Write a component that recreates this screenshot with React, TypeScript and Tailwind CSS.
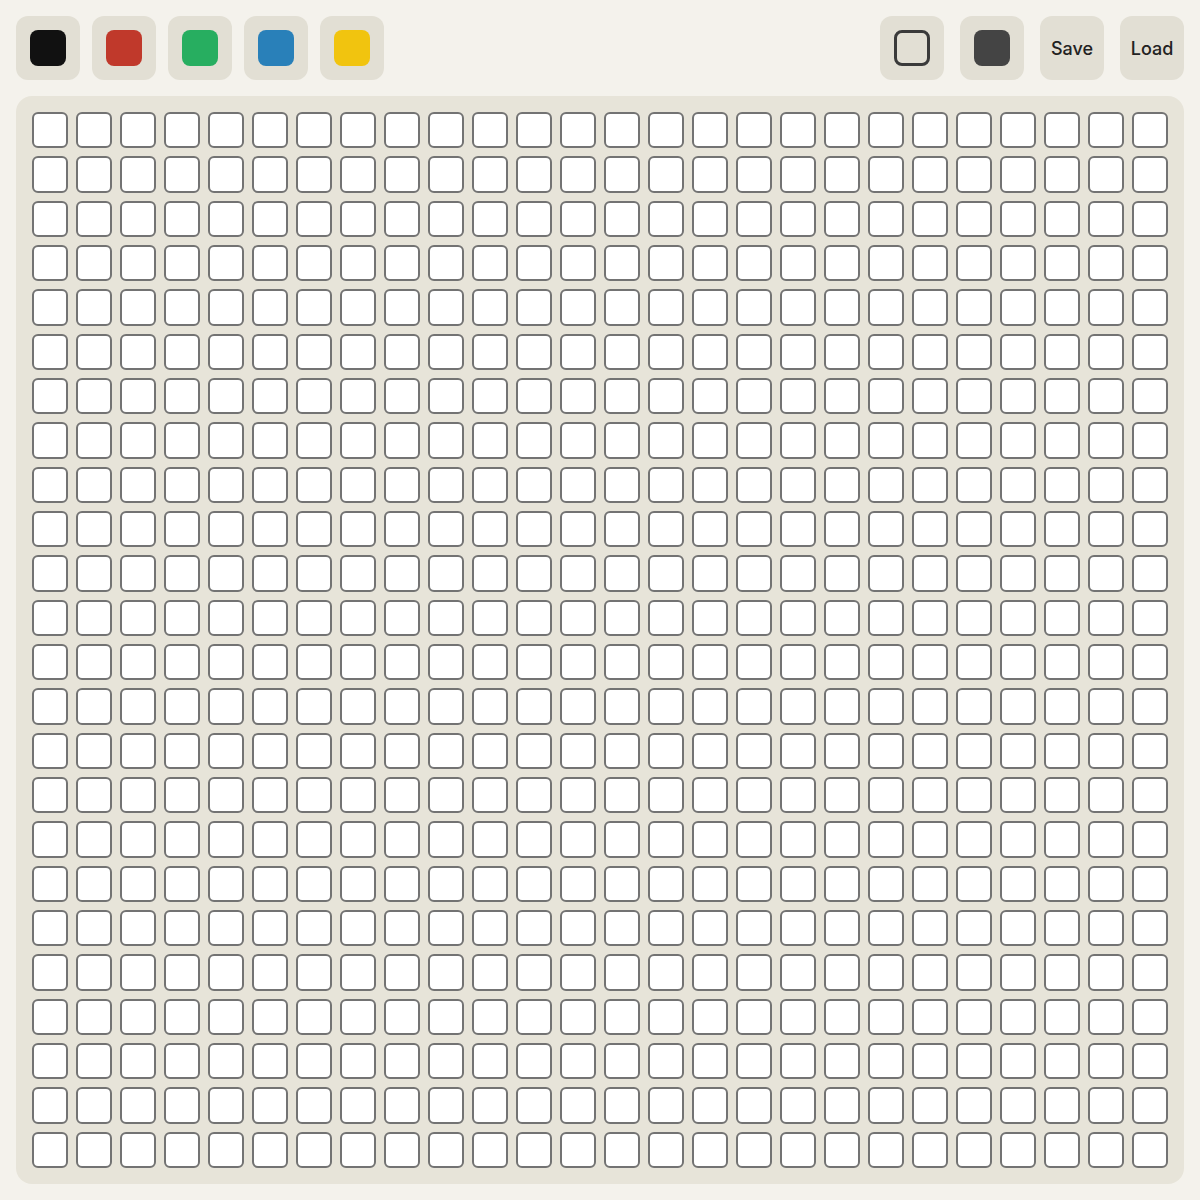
import { useState } from 'react'

const COLS = 26
const ROWS = 24
const COLORS = ['#111111', '#c0392b', '#27ae60', '#2980b9', '#f1c40f']

export default function App() {
  const [color, setColor] = useState(COLORS[0])
  const [cells, setCells] = useState<(string | null)[]>(() => Array(COLS * ROWS).fill(null))

  function paint(i: number) {
    setCells(prev => prev.map((c, j) => (j === i ? color : c)))
  }

  return (
    <div className="h-screen w-full bg-[#f4f2ec] p-4 flex flex-col gap-4 font-['Inter',sans-serif]">
      {/* Toolbar */}
      <div className="flex items-center justify-between h-16 shrink-0">
        <div className="flex gap-3">
          {COLORS.map(c => (
            <button
              key={c}
              onClick={() => setColor(c)}
              className="w-16 h-16 rounded-xl bg-[#e2dfd4] flex items-center justify-center cursor-pointer"
            >
              <span className="w-9 h-9 rounded-lg" style={{ backgroundColor: c }} />
            </button>
          ))}
        </div>
        <div className="flex gap-4">
          <button className="w-16 h-16 rounded-xl bg-[#e2dfd4] flex items-center justify-center cursor-pointer">
            <span className="w-9 h-9 rounded-lg border-[3px] border-[#3a3a3a]" />
          </button>
          <button className="w-16 h-16 rounded-xl bg-[#e2dfd4] flex items-center justify-center cursor-pointer">
            <span className="w-9 h-9 rounded-lg bg-[#444444]" />
          </button>
          <button className="w-16 h-16 rounded-xl bg-[#e2dfd4] flex items-center justify-center pt-0.5 text-lg font-medium text-[#222] cursor-pointer">
            Save
          </button>
          <button className="w-16 h-16 rounded-xl bg-[#e2dfd4] flex items-center justify-center pt-0.5 text-lg font-medium text-[#222] cursor-pointer">
            Load
          </button>
        </div>
      </div>

      {/* Canvas */}
      <div className="flex-1 min-h-0 rounded-2xl bg-[#e7e4d9] p-4 grid grid-cols-[repeat(26,minmax(0,1fr))] grid-rows-[repeat(24,minmax(0,1fr))] gap-2">
        {cells.map((c, i) => (
          <div
            key={i}
            onClick={() => paint(i)}
            className="rounded-md border-2 border-[#737373] bg-white cursor-pointer"
            style={c ? { backgroundColor: c } : undefined}
          />
        ))}
      </div>
    </div>
  )
}
